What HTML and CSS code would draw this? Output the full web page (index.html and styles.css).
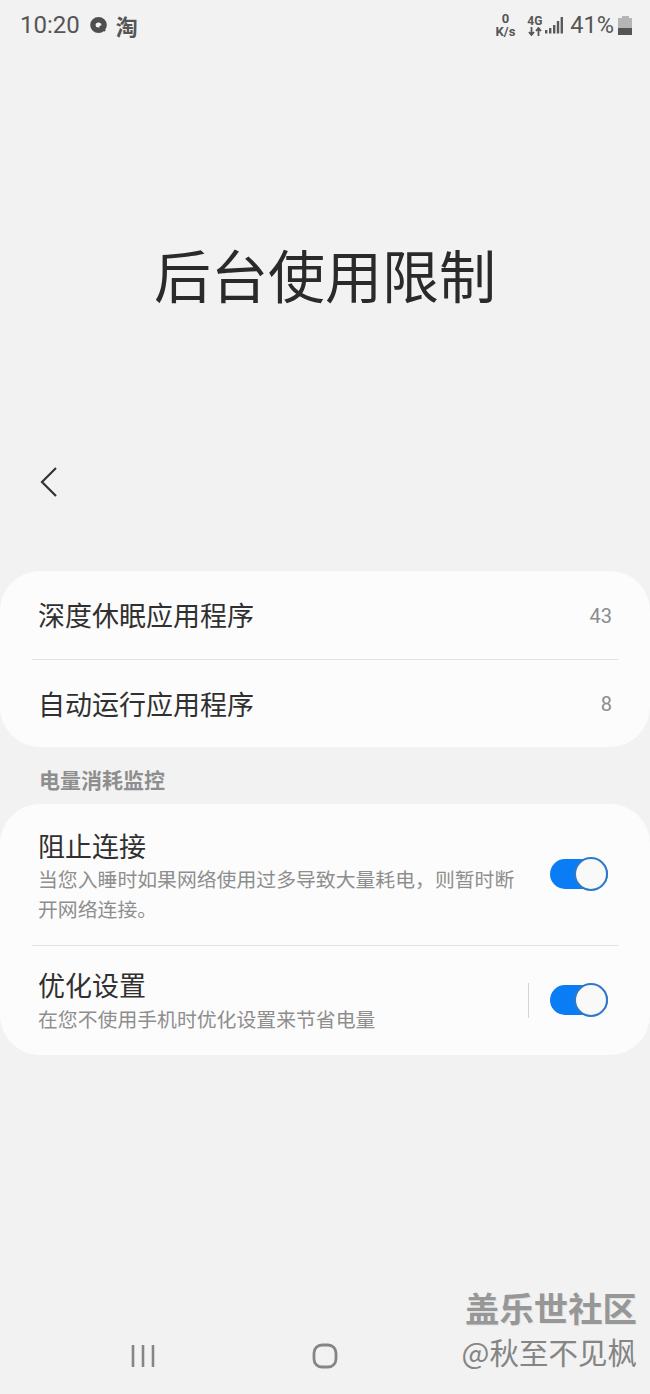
FILE: index.html
```html
<!DOCTYPE html>
<html lang="zh-CN">
<head>
  <meta charset="UTF-8">
  <meta name="viewport" content="width=device-width, initial-scale=1.0">
  <title>后台使用限制</title>
  <link rel="stylesheet" href="styles.css">
</head>
<body>
  <div class="phone">
    <div class="status-bar">
      <div class="status-left">
        <span class="time">10:20</span>
        <svg class="dot-icon" width="17" height="16" viewBox="0 0 17 16"><ellipse cx="8.5" cy="8" rx="5.6" ry="5.2" fill="none" stroke="#4f4f4f" stroke-width="5.4"/><path d="M10 9l5 5" stroke="#4f4f4f" stroke-width="2.4"/></svg>
        <span class="app-glyph">淘</span>
      </div>
      <div class="status-right">
        <div class="speed"><span>0</span><span>K/s</span></div>
        <div class="network">
          <span class="net-label">4G</span>
          <svg width="14" height="9" viewBox="0 0 14 9"><path d="M3.5 0v7M1 5l2.5 3L6 5M10.5 9V2M8 4l2.5-3L13 4" fill="none" stroke="#555" stroke-width="1.8"/></svg>
        </div>
        <svg class="signal" width="18" height="17" viewBox="0 0 18 17"><path d="M0 13h2.4v3.5H0zM4 11h2.4v5.5H4zM8 8h2.4v8.500H8zM11.800 4h2.400v12.500h-2.400zM15.600 0H18v16.500h-2.400z" fill="#5a5a5a"/></svg>
        <span class="battery-pct">41%</span>
        <div class="battery"><div class="battery-cap"></div><div class="battery-body"><div class="battery-level"></div></div></div>
      </div>
    </div>

    <h1 class="page-title">后台使用限制</h1>

    <div class="toolbar">
      <svg width="18" height="32" viewBox="0 0 18 32"><path d="M16 2L2 16l14 14" fill="none" stroke="#333" stroke-width="2.2"/></svg>
    </div>

    <div class="card">
      <div class="row row-nav">
        <span class="row-title">深度休眠应用程序</span>
        <span class="count">43</span>
      </div>
      <div class="divider"></div>
      <div class="row row-nav last">
        <span class="row-title">自动运行应用程序</span>
        <span class="count">8</span>
      </div>
    </div>

    <div class="section-label">电量消耗监控</div>

    <div class="card">
      <div class="row row-switch first">
        <div class="row-text">
          <div class="row-title">阻止连接</div>
          <div class="row-desc">当您入睡时如果网络使用过多导致大量耗电，则暂时断开网络连接。</div>
        </div>
        <div class="switch"><div class="knob"></div></div>
      </div>
      <div class="divider"></div>
      <div class="row row-switch second">
        <div class="row-text">
          <div class="row-title">优化设置</div>
          <div class="row-desc">在您不使用手机时优化设置来节省电量</div>
        </div>
        <div class="vline"></div>
        <div class="switch"><div class="knob"></div></div>
      </div>
    </div>

    <div class="nav-bar">
      <svg width="26" height="24" viewBox="0 0 26 24"><path d="M3 1v22M13 1v22M23 1v22" fill="none" stroke="#858585" stroke-width="2.6"/></svg>
      <svg width="26" height="26" viewBox="0 0 26 26"><rect x="2" y="2" width="22" height="22" rx="8" fill="none" stroke="#858585" stroke-width="2.8"/></svg>
      <div class="nav-spacer"></div>
    </div>

    <div class="watermark">
      <div class="wm-top">盖乐世社区</div>
      <div class="wm-bottom">@秋至不见枫</div>
    </div>
  </div>
</body>
</html>
```

FILE: styles.css
```css
* {
  box-sizing: border-box;
}

body {
  margin: 0;
  padding: 0;
  background-color: #f2f2f2;
  font-family: "Noto Sans CJK SC", Roboto, sans-serif;
  color: #303030;
}

.phone {
  position: relative;
  width: 650px;
  height: 1394px;
  overflow: hidden;
}

.status-bar {
  display: flex;
  justify-content: space-between;
  align-items: center;
  height: 50px;
  padding: 0 18px 0 20px;
  color: #555;
}

.status-left, .status-right {
  display: flex;
  align-items: center;
}

.time {
  font-family: Roboto, sans-serif;
  font-size: 24px;
  margin-right: 10px;
}

.dot-icon {
  margin-right: 9px;
}

.app-glyph {
  font-size: 22px;
  font-weight: 700;
  line-height: 1;
}

.speed {
  display: flex;
  flex-direction: column;
  align-items: center;
  font-family: Roboto, sans-serif;
  font-size: 13px;
  font-weight: 700;
  line-height: 13px;
  margin-right: 12px;
}

.network {
  display: flex;
  flex-direction: column;
  align-items: center;
  width: 15px;
}

.net-label {
  font-family: Roboto, sans-serif;
  font-size: 12px;
  font-weight: 700;
  line-height: 12px;
}

.signal {
  margin: 0 7px 0 3px;
}

.battery-pct {
  font-family: Roboto, sans-serif;
  font-size: 23.500px;
  margin-right: 4px;
}

.battery {
  display: flex;
  flex-direction: column;
  align-items: center;
  width: 14px;
}

.battery-cap {
  width: 7px;
  height: 2px;
  background: #b5b5b5;
}

.battery-body {
  display: flex;
  align-items: flex-end;
  width: 14px;
  height: 17px;
  background: #b5b5b5;
  border-radius: 1px;
}

.battery-level {
  width: 100%;
  height: 7px;
  background: #555;
}

.page-title {
  margin: 0;
  padding-top: 181px;
  height: 395px;
  font-size: 57px;
  line-height: 84px;
  font-weight: 400;
  text-align: center;
  color: #2a2a2a;
}

.toolbar {
  display: flex;
  height: 126px;
  padding: 21px 0 0 40px;
  align-items: flex-start;
}

.card {
  background: #fcfcfc;
  border-radius: 40px;
}

.row {
  display: flex;
  align-items: center;
  padding: 0 38px;
}

.row-nav {
  justify-content: space-between;
  height: 88px;
}

.row-nav.last {
  height: 87px;
}

.row-title {
  font-size: 27px;
  line-height: 36px;
  color: #303030;
}

.count {
  padding-top: 1px;
  font-family: Roboto, sans-serif;
  font-size: 20px;
  color: #8c8c8c;
}

.divider {
  height: 1px;
  margin: 0 32px;
  background: #e2e2e2;
}

.section-label {
  height: 57px;
  padding: 18px 0 0 39px;
  font-size: 21px;
  line-height: 28px;
  font-weight: 700;
  color: #8e8e8e;
}

.row-switch {
  padding-right: 42px;
}

.row-switch.first {
  height: 141px;
  padding-bottom: 1px;
  padding-top: 4px;
}

.row-switch.second {
  height: 109px;
  padding-top: 1px;
}

.row-text {
  flex: 1;
  min-width: 0;
}

.row-desc {
  width: 480px;
  font-size: 19.850px;
  line-height: 32px;
  color: #8e8e8e;
}

.first .row-desc {
  line-height: 30px;
}

.first .switch {
  margin-bottom: 4px;
}

.second .switch, .second .vline {
  margin-bottom: 2px;
}

.vline {
  width: 1px;
  height: 35px;
  margin-right: 21px;
  background: #d4d4d4;
}

.switch {
  position: relative;
  flex: none;
  width: 58px;
  height: 30px;
  border-radius: 15px;
  background: #0a7df5;
}

.knob {
  position: absolute;
  right: 0;
  top: -2px;
  width: 34px;
  height: 34px;
  border-radius: 50%;
  background: #f9f9f9;
  border: 2px solid #2f7ac8;
}

.nav-bar {
  position: absolute;
  left: 0;
  right: 0;
  top: 1343px;
  display: flex;
  justify-content: space-between;
  align-items: center;
  padding: 0 130px;
}

.nav-spacer {
  width: 26px;
}

.watermark {
  position: absolute;
  right: 13px;
  top: 1285px;
  text-align: right;
}

.wm-top {
  font-size: 34.400px;
  line-height: 44px;
  font-weight: 700;
  color: #979797;
  text-shadow: 1px 1px 0 #e4e4e4;
}

.wm-bottom {
  margin-top: 2px;
  font-size: 29.500px;
  line-height: 40px;
  color: #858585;
}
```
